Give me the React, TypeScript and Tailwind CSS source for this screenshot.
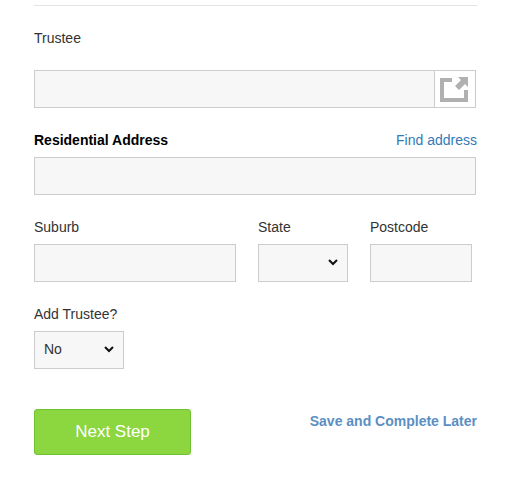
const fieldClass = "h-[38px] border border-[#cccccc] bg-[#f7f7f7] block";

function SelectBox({ width, value }: { width: string; value?: string }) {
  return (
    <div className={`relative ${width}`}>
      <select
        className={`${fieldClass} w-full appearance-none pl-[9px] pb-[2px]`}
        defaultValue={value}
      >
        {value ? (
          <>
            <option>No</option>
            <option>Yes</option>
          </>
        ) : null}
      </select>
      <svg
        width="10"
        height="7"
        viewBox="0 0 10 7"
        className="absolute right-[10px] top-[15px] pointer-events-none"
      >
        <path d="M1 1l4 4 4-4" fill="none" stroke="#111111" strokeWidth="2" />
      </svg>
    </div>
  );
}

export default function App() {
  return (
    <div className="w-[523px] h-[496px] bg-white overflow-hidden pl-[34px] pt-[5px] font-['Liberation_Sans',Arial,sans-serif] text-[14px] leading-[20px] text-[#333333]">
      <div className="w-[443px]">
        <div className="h-px bg-[#e3e3e3]" />

        <label className="block mt-[22px] mb-[22px]">Trustee</label>
        <div className="w-[442px] h-[38px] flex border border-[#cccccc]">
          <input className="flex-1 min-w-0 bg-[#f7f7f7] outline-none" />
          <button className="w-[41px] border-l border-[#cccccc] bg-white flex items-center justify-start pl-[5px]">
            <svg width="28" height="25" viewBox="0 0 28 25" className="block">
              <path d="M0 1h12v4H4v16h20v-8h4v12H0z" fill="#b0b0b0" />
              <path d="M18 0h10v10l-3-3-6 6-4-4 6-6z" fill="#b0b0b0" />
            </svg>
          </button>
        </div>

        <div className="flex justify-between items-center mt-[22px] mb-[7px]">
          <span className="font-bold text-black">Residential Address</span>
          <a className="text-[#337ab7]">Find address</a>
        </div>
        <input className={`${fieldClass} w-[442px]`} />

        <div className="flex gap-[22px] mt-[22px]">
          <div>
            <label className="block mb-[7px]">Suburb</label>
            <input className={`${fieldClass} w-[202px]`} />
          </div>
          <div>
            <label className="block mb-[7px]">State</label>
            <SelectBox width="w-[90px]" />
          </div>
          <div>
            <label className="block mb-[7px]">Postcode</label>
            <input className={`${fieldClass} w-[102px]`} />
          </div>
        </div>

        <label className="block mt-[22px] mb-[7px]">Add Trustee?</label>
        <SelectBox width="w-[90px]" value="No" />

        <div className="flex justify-between items-start mt-[40px]">
          <button className="w-[157px] h-[46px] rounded-[3px] border border-[#6fc230] bg-[#8cd640] text-white text-[17px]">
            Next Step
          </button>
          <a className="mt-[2px] font-bold text-[#5b8fc4]">Save and Complete Later</a>
        </div>
      </div>
    </div>
  );
}
